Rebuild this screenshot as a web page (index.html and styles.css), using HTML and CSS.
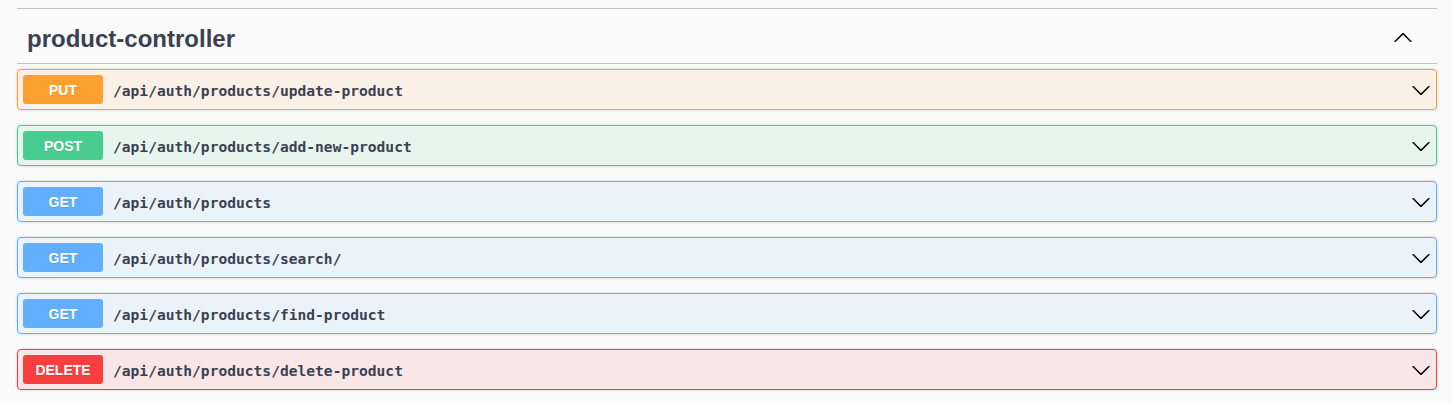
FILE: index.html
```html
<!DOCTYPE html>
<html>
<head>
<meta charset="utf-8">
<link rel="stylesheet" href="styles.css">
</head>
<body>
<div class="wrapper">
  <div class="prev-tag"></div>
  <h3 class="tag">
    <span class="tag-name">product-controller</span>
    <button class="expand" aria-label="collapse">
      <svg width="20" height="20" viewBox="0 0 20 20"><path d="M17.418 14.908c.272.268.709.268.979 0s.271-.701 0-.969l-7.908-7.83c-.27-.268-.707-.268-.979 0l-7.908 7.83c-.27.268-.27.701 0 .969.271.268.709.268.979 0L10 7.767l7.418 7.141z"/></svg>
    </button>
  </h3>
  <div class="ops">
    <div class="op put">
      <span class="method">PUT</span>
      <span class="path">/api/auth/products/update-product</span>
      <svg class="arrow" width="20" height="20" viewBox="0 0 20 20"><path d="M17.418 6.109c.272-.268.709-.268.979 0s.271.701 0 .969l-7.908 7.83c-.27.268-.707.268-.979 0l-7.908-7.830c-.27-.268-.27-.701 0-.969.271-.268.709-.268.979 0L10 13.25l7.418-7.141z"/></svg>
    </div>
    <div class="op post">
      <span class="method">POST</span>
      <span class="path">/api/auth/products/add-new-product</span>
      <svg class="arrow" width="20" height="20" viewBox="0 0 20 20"><path d="M17.418 6.109c.272-.268.709-.268.979 0s.271.701 0 .969l-7.908 7.83c-.27.268-.707.268-.979 0l-7.908-7.83c-.27-.268-.27-.701 0-.969.271-.268.709-.268.979 0L10 13.25l7.418-7.141z"/></svg>
    </div>
    <div class="op get">
      <span class="method">GET</span>
      <span class="path">/api/auth/products</span>
      <svg class="arrow" width="20" height="20" viewBox="0 0 20 20"><path d="M17.418 6.109c.272-.268.709-.268.979 0s.271.701 0 .969l-7.908 7.83c-.27.268-.707.268-.979 0l-7.908-7.83c-.27-.268-.27-.701 0-.969.271-.268.709-.268.979 0L10 13.25l7.418-7.141z"/></svg>
    </div>
    <div class="op get">
      <span class="method">GET</span>
      <span class="path">/api/auth/products/search/</span>
      <svg class="arrow" width="20" height="20" viewBox="0 0 20 20"><path d="M17.418 6.109c.272-.268.709-.268.979 0s.271.701 0 .969l-7.908 7.83c-.27.268-.707.268-.979 0l-7.908-7.83c-.27-.268-.27-.701 0-.969.271-.268.709-.268.979 0L10 13.25l7.418-7.141z"/></svg>
    </div>
    <div class="op get">
      <span class="method">GET</span>
      <span class="path">/api/auth/products/find-product</span>
      <svg class="arrow" width="20" height="20" viewBox="0 0 20 20"><path d="M17.418 6.109c.272-.268.709-.268.979 0s.271.701 0 .969l-7.908 7.83c-.27.268-.707.268-.979 0l-7.908-7.83c-.27-.268-.27-.701 0-.969.271-.268.709-.268.979 0L10 13.25l7.418-7.141z"/></svg>
    </div>
    <div class="op delete">
      <span class="method">DELETE</span>
      <span class="path">/api/auth/products/delete-product</span>
      <svg class="arrow" width="20" height="20" viewBox="0 0 20 20"><path d="M17.418 6.109c.272-.268.709-.268.979 0s.271.701 0 .969l-7.908 7.83c-.27.268-.707.268-.979 0l-7.908-7.83c-.27-.268-.27-.701 0-.969.271-.268.709-.268.979 0L10 13.25l7.418-7.141z"/></svg>
    </div>
  </div>
</div>
</body>
</html>
```

FILE: styles.css
```css
html, body {
  margin: 0;
  padding: 0;
  background: #fafafa;
}

body {
  font-family: "Liberation Sans", Arial, sans-serif;
  color: #3b4151;
}

.wrapper {
  padding: 0 15px 0 17px;
}

.prev-tag {
  height: 8px;
  border-bottom: 1px solid rgba(59, 65, 81, 0.3);
}

.tag {
  display: flex;
  align-items: flex-start;
  margin: 0 0 5px;
  padding: 13px 24px 7px 10px;
  border-bottom: 1px solid rgba(59, 65, 81, 0.3);
  font-size: 24px;
  font-weight: bold;
  line-height: 34px;
  color: #3b4151;
}

.tag-name {
  flex: 1;
}

.expand {
  border: none;
  background: none;
  padding: 0;
  margin: 5px 0 0;
  width: 20px;
  height: 20px;
  display: flex;
}

.expand svg, .arrow {
  fill: #000;
  display: block;
}

.op {
  display: flex;
  align-items: center;
  padding: 5px;
  margin-bottom: 15px;
  border: 1px solid;
  border-radius: 4px;
  box-shadow: 0 0 3px rgba(0, 0, 0, 0.19);
}

.method {
  min-width: 80px;
  padding: 7px 0 5px;
  border-radius: 3px;
  font-size: 14px;
  line-height: 17px;
  font-weight: bold;
  text-align: center;
  color: #fff;
  text-shadow: 0 1px 0 rgba(0, 0, 0, 0.1);
}

.path {
  flex: 1;
  padding: 1px 10px 0;
  font-family: "DejaVu Sans Mono", "Liberation Mono", monospace;
  font-size: 14.6px;
  font-weight: bold;
  color: #3b4151;
}

.put { background: rgba(252, 161, 48, 0.1); border-color: #fca130; }
.put .method { background: #fca130; }

.post { background: rgba(73, 204, 144, 0.1); border-color: #49cc90; }
.post .method { background: #49cc90; }

.get { background: rgba(97, 175, 254, 0.1); border-color: #61affe; }
.get .method { background: #61affe; }

.delete { background: rgba(249, 62, 62, 0.1); border-color: #f93e3e; }
.delete .method { background: #f93e3e; }
```
